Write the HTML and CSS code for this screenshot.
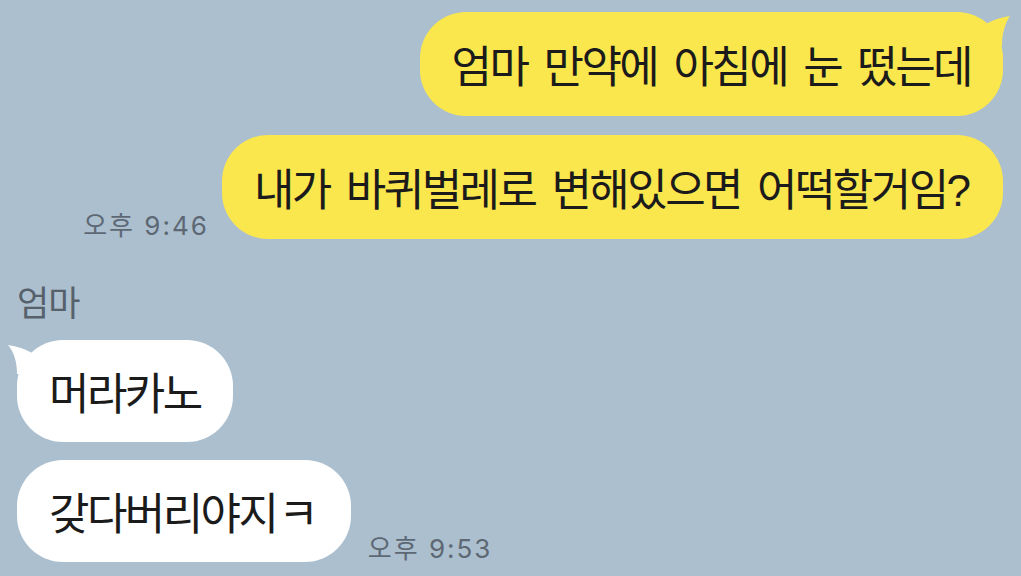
FILE: index.html
```html
<!DOCTYPE html>
<html lang="ko">
<head>
<meta charset="utf-8">
<title>채팅</title>
<link rel="stylesheet" href="styles.css">
</head>
<body>
<main class="chat">
  <section class="group group-me">
    <div class="row">
      <div class="bubble bubble-me has-tail">엄마 만약에 아침에 눈 떴는데<svg class="tail tail-right" width="30" height="34" viewBox="0 0 30 34"><path d="M29 4 C22 5 14 7 5 12 L5 34 L21 34 C21 22 24 11 29 4 Z"/></svg></div>
    </div>
    <div class="row">
      <span class="time">오후 9:46</span>
      <div class="bubble bubble-me">내가 바퀴벌레로 변해있으면 어떡할거임<span class="q">?</span></div>
    </div>
  </section>
  <section class="group group-them">
    <div class="name">엄마</div>
    <div class="row">
      <div class="bubble bubble-them has-tail">머라카노<svg class="tail tail-left" width="30" height="34" viewBox="0 0 30 34"><path d="M0 5 C7 6 15 8 24 13 L24 34 L9 34 C9 22 6 12 0 5 Z"/></svg></div>
    </div>
    <div class="row">
      <div class="bubble bubble-them">갖다버리야지<span class="jamo">ㅋ</span></div>
      <span class="time">오후 9:53</span>
    </div>
  </section>
</main>
</body>
</html>
```
FILE: styles.css
```css
html, body {
  margin: 0;
  padding: 0;
}
body {
  background: #acbfcf;
  width: 1021px;
  height: 576px;
  overflow: hidden;
  font-family: "Noto Sans CJK KR", "Noto Sans", sans-serif;
}
.chat {
  display: flex;
  flex-direction: column;
  padding: 12px 18px 0 17px;
}
.group {
  display: flex;
  flex-direction: column;
  gap: 19px;
}
.group-me {
  align-items: flex-end;
}
.group-them {
  align-items: flex-start;
  margin-top: 42px;
  gap: 0;
}
.row {
  display: flex;
  align-items: flex-end;
}
.group-me .row { gap: 13px; }
.group-them .row { gap: 17px; }
.group-them .row + .row { margin-top: 18px; }
.bubble {
  position: relative;
  font-size: 44px;
  line-height: 44px;
  letter-spacing: -2.6px;
  word-spacing: 6.5px;
  color: #1b1b1b;
  padding: 30px 32px;
  border-radius: 46px;
  white-space: nowrap;
}
.bubble .q {
  font-family: "Liberation Sans", "Noto Sans CJK KR", sans-serif;
  letter-spacing: 0;
  line-height: 0;
}
.bubble .jamo {
  letter-spacing: 0;
  margin-left: 2px;
}
.bubble-me {
  background: #fae64d;
  fill: #fae64d;
}
.bubble-them {
  background: #ffffff;
  fill: #ffffff;
  padding: 29px 32px;
}
.tail {
  position: absolute;
  top: 0;
}
.tail-right { right: -8px; }
.tail-left { left: -9px; }
.time {
  font-family: "Inter", "Noto Sans CJK KR", sans-serif;
  font-size: 26px;
  line-height: 26px;
  color: #5d6874;
  letter-spacing: 2px;
  white-space: nowrap;
  margin-bottom: 0;
}
.name {
  font-size: 35px;
  line-height: 40px;
  color: #56616b;
  margin-left: 0;
  margin-bottom: 19px;
  letter-spacing: -1px;
}
```
